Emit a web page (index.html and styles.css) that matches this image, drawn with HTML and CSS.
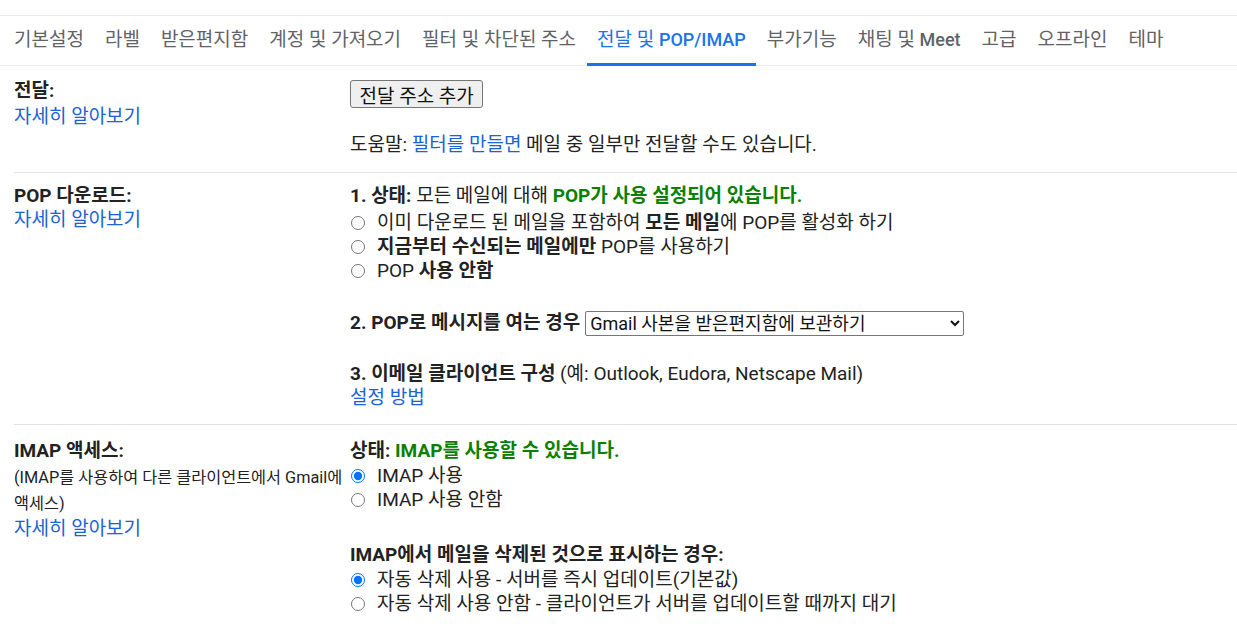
FILE: index.html
```html
<!DOCTYPE html>
<html lang="ko">
<head>
  <meta charset="UTF-8">
  <title>설정 - 전달 및 POP/IMAP</title>
  <link rel="stylesheet" href="styles.css">
</head>
<body>
  <div class="tabs">
    <a class="tab">기본설정</a>
    <a class="tab">라벨</a>
    <a class="tab">받은편지함</a>
    <a class="tab">계정 및 가져오기</a>
    <a class="tab">필터 및 차단된 주소</a>
    <a class="tab active">전달 및&nbsp;<span class="latin">POP/IMAP</span></a>
    <a class="tab">부가기능</a>
    <a class="tab">채팅 및&nbsp;<span class="latin">Meet</span></a>
    <a class="tab">고급</a>
    <a class="tab">오프라인</a>
    <a class="tab">테마</a>
  </div>

  <div class="section first">
    <div class="label">
      <div class="title">전달:</div>
      <a class="link">자세히 알아보기</a>
    </div>
    <div class="content">
      <button class="btn" type="button">전달 주소 추가</button>
      <div class="help">도움말: <a class="link">필터를 만들면</a> 메일 중 일부만 전달할 수도 있습니다.</div>
    </div>
  </div>

  <div class="section">
    <div class="label">
      <div class="title">POP 다운로드:</div>
      <a class="link">자세히 알아보기</a>
    </div>
    <div class="content">
      <div class="line"><b>1. 상태:</b> 모든 메일에 대해 <b class="ok">POP가 사용 설정되어 있습니다.</b></div>
      <div class="options pop">
        <label class="option"><input type="radio" name="pop"><span>이미 다운로드 된 메일을 포함하여 <b>모든 메일</b>에 POP를 활성화 하기</span></label>
        <label class="option"><input type="radio" name="pop"><span><b>지금부터 수신되는 메일에만</b> POP를 사용하기</span></label>
        <label class="option"><input type="radio" name="pop"><span>POP <b>사용 안함</b></span></label>
      </div>
      <div class="select-row">
        <b>2. POP로 메시지를 여는 경우</b>
        <select class="select">
          <option>Gmail 사본을 받은편지함에 보관하기</option>
        </select>
      </div>
      <div class="line step3"><b>3. 이메일 클라이언트 구성</b> (예: Outlook, Eudora, Netscape Mail)</div>
      <a class="link">설정 방법</a>
    </div>
  </div>

  <div class="section last">
    <div class="label">
      <div class="title">IMAP 액세스:</div>
      <div class="note">(IMAP를 사용하여 다른 클라이언트에서 Gmail에 액세스)</div>
      <a class="link">자세히 알아보기</a>
    </div>
    <div class="content">
      <div class="line"><b>상태:</b> <b class="ok">IMAP를 사용할 수 있습니다.</b></div>
      <div class="options">
        <label class="option"><input type="radio" name="imap" checked><span>IMAP 사용</span></label>
        <label class="option"><input type="radio" name="imap"><span>IMAP 사용 안함</span></label>
      </div>
      <div class="line subhead"><b>IMAP에서 메일을 삭제된 것으로 표시하는 경우:</b></div>
      <div class="options">
        <label class="option"><input type="radio" name="expunge" checked><span>자동 삭제 사용 - 서버를 즉시 업데이트(기본값)</span></label>
        <label class="option"><input type="radio" name="expunge"><span>자동 삭제 사용 안함 - 클라이언트가 서버를 업데이트할 때까지 대기</span></label>
      </div>
    </div>
  </div>
</body>
</html>
```

FILE: styles.css
```css
body {
  margin: 0;
  padding-top: 15px;
  font-family: Roboto, "Noto Sans CJK KR", sans-serif;
  font-size: 19px;
  line-height: 24px;
  color: #222;
  background-color: #fff;
}

.tabs {
  display: flex;
  height: 49px;
  padding-left: 3.5px;
  border-top: 1px solid #e8eaed;
  border-bottom: 1px solid #e8eaed;
}

.tab {
  display: flex;
  align-items: center;
  padding: 0 10.5px;
  font-size: 19px;
  color: #5f6368;
  white-space: nowrap;
  border-bottom: 3px solid transparent;
  margin-bottom: -1px;
}

.tab .latin {
  font-size: 18px;
  font-weight: 500;
}

.tab.active {
  color: #1a73e8;
  border-bottom-color: #1a73e8;
}

.section {
  display: grid;
  grid-template-columns: 336px 1fr;
  margin-left: 14px;
  padding: 11px 0 14px;
  border-bottom: 1px solid #e3e3e3;
}

.section.first {
  padding-top: 13px;
  padding-bottom: 15px;
}

.section.first .link {
  margin-top: 2px;
}

.section.first .help .link {
  margin-top: 0;
}

.section.last {
  border-bottom: none;
  padding-top: 14px;
}

.title {
  font-weight: bold;
}

.link {
  color: #1a62d6;
  cursor: pointer;
}

.label .link {
  display: block;
}

.note {
  font-size: 16.3px;
  line-height: 26px;
  padding-top: 2px;
}

.btn {
  display: block;
  margin-top: 1px;
  height: 28px;
  padding: 0 8.5px;
  font-family: inherit;
  font-size: 19px;
  color: #111;
  background-color: #efefef;
  border: 1px solid #767676;
  border-radius: 3px;
}

.help {
  margin-top: 25px;
}

.ok {
  color: #0a8000;
}

.options {
  margin-top: 1px;
}

.options.pop {
  margin-top: 3px;
}

.option {
  display: flex;
  align-items: center;
}

.option input {
  flex: none;
  width: 14px;
  height: 14px;
  margin: 0 12px 0 1px;
}

.select-row {
  display: flex;
  align-items: center;
  gap: 5px;
  margin-top: 26px;
  height: 28px;
}

.select {
  width: 379px;
  height: 25px;
  font-family: inherit;
  font-size: 18px;
  color: #111;
  border: 1px solid #767676;
  border-radius: 2px;
  background-color: #fff;
}

.step3 {
  margin-top: 25px;
}

.subhead {
  margin-top: 31px;
}
```
